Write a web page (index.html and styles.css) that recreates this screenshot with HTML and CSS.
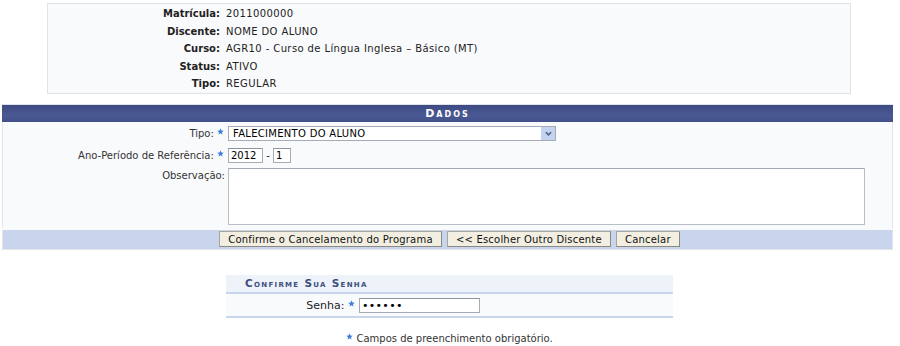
FILE: index.html
```
<!DOCTYPE html>
<html>
<head>
    <title>Cancelamento de Programa</title>
    <link rel="stylesheet" href="styles.css">
</head>
<body>
    <div class="page">
        <table class="info">
            <tr><th>Matrícula:</th><td>2011000000</td></tr>
            <tr><th>Discente:</th><td>NOME DO ALUNO</td></tr>
            <tr><th>Curso:</th><td>AGR10 - Curso de Língua Inglesa – Básico (MT)</td></tr>
            <tr><th>Status:</th><td>ATIVO</td></tr>
            <tr><th>Tipo:</th><td>REGULAR</td></tr>
        </table>

        <table class="form">
            <caption>Dados</caption>
            <tr class="row-tipo">
                <th>Tipo: <svg class="star" viewBox="0 0 10 10"><path d="M5 0.5 6.3 3.6 9.6 3.8 7.1 6 7.9 9.3 5 7.5 2.1 9.3 2.9 6 0.4 3.8 3.7 3.6Z"/></svg></th>
                <td>
                    <span class="select">
                        <select>
                            <option>FALECIMENTO DO ALUNO</option>
                        </select>
                        <span class="arrow"><svg viewBox="0 0 10 8"><path d="M2 2.5 5 5.5 8 2.5" /></svg></span>
                    </span>
                </td>
            </tr>
            <tr class="row-ano">
                <th>Ano-Período de Referência: <svg class="star" viewBox="0 0 10 10"><path d="M5 0.5 6.3 3.6 9.6 3.8 7.1 6 7.9 9.3 5 7.5 2.1 9.3 2.9 6 0.4 3.8 3.7 3.6Z"/></svg></th>
                <td>
                    <input type="text" class="ano" value="2012"> - <input type="text" class="periodo" value="1">
                </td>
            </tr>
            <tr class="row-obs">
                <th>Observação:</th>
                <td><textarea></textarea></td>
            </tr>
            <tr class="actions">
                <td colspan="2">
                    <button>Confirme o Cancelamento do Programa</button>
                    <button>&lt;&lt; Escolher Outro Discente</button>
                    <button>Cancelar</button>
                </td>
            </tr>
        </table>

        <table class="senha">
            <caption>Confirme Sua Senha</caption>
            <tr>
                <th>Senha: <svg class="star" viewBox="0 0 10 10"><path d="M5 0.5 6.3 3.6 9.6 3.8 7.1 6 7.9 9.3 5 7.5 2.1 9.3 2.9 6 0.4 3.8 3.7 3.6Z"/></svg></th>
                <td><input type="password" value="123456"></td>
            </tr>
        </table>

        <p class="obrigatorio">
            <svg class="star" viewBox="0 0 10 10"><path d="M5 0.5 6.3 3.6 9.6 3.8 7.1 6 7.9 9.3 5 7.5 2.1 9.3 2.9 6 0.4 3.8 3.7 3.6Z"/></svg>
            Campos de preenchimento obrigatório.
        </p>
    </div>
</body>
</html>
```

FILE: styles.css
```
body {
    margin: 0;
    font-family: "DejaVu Sans", Verdana, sans-serif;
    font-size: 10px;
    color: #222;
    background: #fff;
}
.page {
    width: 895px;
    padding-top: 3px;
}
table {
    border-collapse: collapse;
}
.star {
    width: 7px;
    height: 7px;
    fill: #3f7fd8;
    vertical-align: 2px;
}

/* dados do discente */
.info {
    width: 804px;
    margin: 0 0 10px 47px;
    background: #f9fafc;
    border: 1px solid #e1e3e8;
}
.info th {
    width: 172px;
    text-align: right;
    font-weight: bold;
    padding: 2px 2px 2px 0;
    height: 13.5px;
    line-height: 13px;
}
.info td {
    padding: 2px 0 2px 4px;
    line-height: 13px;
    letter-spacing: 0.4px;
}
.info tr:first-child th,
.info tr:first-child td {
    padding-top: 3px;
}

/* formulario */
.form {
    width: 891px;
    margin-left: 2px;
    background: #f9fafc;
    border: 1px solid #e3e5ea;
    border-top: none;
}
.form caption {
    background: linear-gradient(#3d4a82, #4a5994 60%, #43518a);
    color: #fff;
    font-weight: bold;
    font-variant: small-caps;
    letter-spacing: 2px;
    font-size: 11px;
    line-height: 17px;
    height: 17px;
    border-top: 1px solid #dfe3ea;
}
.form th {
    width: 222px;
    text-align: right;
    font-weight: normal;
    white-space: nowrap;
    padding: 0 3px 0 0;
    color: #333;
}
.form td {
    padding: 0;
}
.form th .star {
    margin-right: 1px;
}
.row-tipo th, .row-tipo td {
    padding-top: 4px;
    padding-bottom: 4px;
}
.row-ano th, .row-ano td {
    padding-top: 3px;
    padding-bottom: 5px;
}
.row-obs th {
    vertical-align: top;
    padding-top: 2px;
}
.row-obs td {
    padding-bottom: 3px;
}
.select {
    position: relative;
    display: inline-block;
    vertical-align: middle;
}
select {
    appearance: none;
    width: 328px;
    height: 15px;
    font-family: inherit;
    font-size: 10px;
    color: #000;
    padding: 0 0 0 4px;
    border: 1px solid #a5acb5;
    background: #fff;
    border-radius: 0;
    display: block;
    letter-spacing: 0.3px;
}
.arrow {
    position: absolute;
    right: 1px;
    top: 1px;
    width: 14px;
    height: 13px;
    background: #c4d3f0;
    display: flex;
    align-items: center;
    justify-content: center;
}
.arrow svg {
    width: 9px;
    height: 7px;
    fill: none;
    stroke: #4d6185;
    stroke-width: 1.8;
}
input[type=text], input[type=password] {
    font-family: inherit;
    font-size: 10px;
    color: #000;
    height: 15px;
    box-sizing: border-box;
    border: 1px solid #a5acb5;
    border-top-color: #8e959e;
    padding: 0 2px;
    vertical-align: middle;
}
.ano {
    width: 35px;
}
.periodo {
    width: 18px;
}
textarea {
    display: block;
    width: 637px;
    height: 57px;
    box-sizing: border-box;
    border: 1px solid #b8bec6;
    border-top-color: #a4aab3;
    resize: none;
    margin: 0;
    font-family: inherit;
}
.actions td {
    background: #c8d5ec;
    text-align: center;
    height: 19px;
    padding: 0 0 0 4px;
    border-top: 2px solid #f9fafc;
}
button {
    font-family: inherit;
    font-size: 10px;
    color: #111;
    background: #f2efe2;
    border: 1px solid #a8a59a;
    border-right-color: #8c897e;
    border-bottom-color: #8c897e;
    height: 16px;
    padding: 0 8px;
    margin: 0 1px;
    letter-spacing: 0.2px;
}

/* senha */
.senha {
    width: 447px;
    margin: 25px 0 0 226px;
    background: #f9fafc;
    border-bottom: 2px solid #c8d5ec;
}
.senha caption {
    background: #eef2f9;
    color: #3d4e7e;
    font-weight: bold;
    font-variant: small-caps;
    letter-spacing: 1.3px;
    font-size: 10.5px;
    text-align: left;
    padding: 0 0 0 19px;
    height: 17px;
    line-height: 17px;
    border-bottom: 2px solid #c8d5ec;
}
.senha th {
    width: 129px;
    text-align: right;
    font-weight: normal;
    font-size: 11px;
    padding: 4px 4px 3px 0;
    white-space: nowrap;
}
.senha td {
    padding: 4px 0 3px;
}
.senha input[type=password] {
    width: 121px;
    font-size: 11px;
    letter-spacing: 0.3px;
}
.obrigatorio {
    width: 895px;
    text-align: center;
    margin: 15px 0 0 2px;
    color: #333;
}
```
